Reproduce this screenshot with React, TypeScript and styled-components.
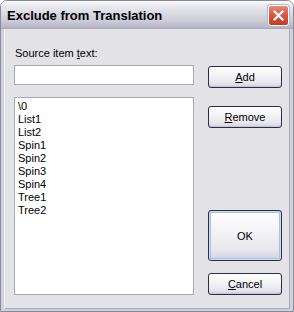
import React from 'react'
import styled, { createGlobalStyle } from 'styled-components'

const GlobalStyle = createGlobalStyle`
  html, body {
    margin: 0;
    padding: 0;
    background: #ffffff;
  }
`

const items = ['\\0', 'List1', 'List2', 'Spin1', 'Spin2', 'Spin3', 'Spin4', 'Tree1', 'Tree2']

const CloseIcon = () => (
  <svg width="11" height="11" viewBox="0 0 11 11">
    <path d="M1.5 1.5 L9.5 9.5 M9.5 1.5 L1.5 9.5" stroke="#fff" strokeWidth="2.2" strokeLinecap="square" />
  </svg>
)

const App: React.FC = () => {
  return (
    <>
      <GlobalStyle />
      <Window>
        <TitleBar>
          <Title>Exclude from Translation</Title>
          <CloseButton>
            <CloseIcon />
          </CloseButton>
        </TitleBar>
        <Body>
          <LeftColumn>
            <Label>
              Source item <u>t</u>ext:
            </Label>
            <TextBox />
            <ListBox>
              {items.map((item) => (
                <ListItem key={item}>{item}</ListItem>
              ))}
            </ListBox>
          </LeftColumn>
          <RightColumn>
            <Button $top={37}>
              <u>A</u>dd
            </Button>
            <Button $top={18}>
              <u>R</u>emove
            </Button>
            <Button $top={82} $tall $default>
              OK
            </Button>
            <Button $top={12}>
              <u>C</u>ancel
            </Button>
          </RightColumn>
        </Body>
      </Window>
    </>
  )
}

export default App

const Window = styled.div`
  width: 294px;
  height: 312px;
  box-sizing: border-box;
  display: flex;
  flex-direction: column;
  border: 1px solid #8a8a9c;
  border-radius: 7px 7px 0 0;
  overflow: hidden;
  background: #e3e3e7;
  font-family: 'Liberation Sans', Arial, sans-serif;
  font-size: 11px;
  color: #000;
`

const TitleBar = styled.div`
  height: 28px;
  flex-shrink: 0;
  display: flex;
  align-items: center;
  justify-content: space-between;
  padding: 0 4px 0 6px;
  background: linear-gradient(
    to bottom,
    #ffffff 0%,
    #eeeef3 12%,
    #dcdce4 40%,
    #cdcdd7 70%,
    #b9b9c8 92%,
    #a8a8b9 100%
  );
`

const Title = styled.div`
  font-family: 'Liberation Sans', Arial, sans-serif;
  font-weight: bold;
  font-size: 13px;
  color: #000;
  padding-top: 1px;
`

const CloseButton = styled.div`
  width: 21px;
  height: 21px;
  box-sizing: border-box;
  display: flex;
  align-items: center;
  justify-content: center;
  border: 1px solid #ffffff;
  border-radius: 3px;
  background: linear-gradient(to bottom, #e88a7a 0%, #d95a45 45%, #c33c25 100%);
  box-shadow: 0 0 0 1px #b9b9c8;
`

const Body = styled.div`
  flex: 1;
  display: flex;
  gap: 14px;
  padding: 0 8px 14px 10px;
  border-left: 3px solid #d0d0da;
  border-right: 3px solid #d0d0da;
  border-bottom: 3px solid #d0d0da;
  box-shadow: inset 1px 0 0 #f4f4f7, inset -1px 0 0 #a8a8b8, inset 0 -1px 0 #a8a8b8;
`

const LeftColumn = styled.div`
  width: 180px;
  display: flex;
  flex-direction: column;
`

const Label = styled.div`
  margin-top: 18px;
  height: 13px;
  line-height: 13px;
  padding-left: 1px;
`

const TextBox = styled.div`
  margin-top: 5px;
  height: 20px;
  box-sizing: border-box;
  border: 1px solid #a5acb5;
  background: #fff;
`

const ListBox = styled.div`
  margin-top: 12px;
  flex: 1;
  box-sizing: border-box;
  border: 1px solid #a5acb5;
  background: #fff;
  padding: 2px 2px;
`

const ListItem = styled.div`
  height: 13px;
  line-height: 13px;
  padding-left: 1px;
`

const RightColumn = styled.div`
  width: 74px;
  display: flex;
  flex-direction: column;
`

const Button = styled.div<{ $top: number; $tall?: boolean; $default?: boolean }>`
  margin-top: ${(p) => p.$top}px;
  height: ${(p) => (p.$tall ? 51 : 22)}px;
  box-sizing: border-box;
  display: flex;
  align-items: center;
  justify-content: center;
  border: 1px solid #2c2c44;
  border-radius: 3px;
  background: linear-gradient(to bottom, #ffffff 0%, #f4f4f6 40%, #e6e6ec 80%, #d2d2dc 100%);
  box-shadow: ${(p) =>
    p.$default
      ? 'inset 0 0 0 1px #cfdcf4, inset 0 0 0 2px #a9c0ec'
      : 'inset 0 -1px 0 #c6c6d2'};
`
